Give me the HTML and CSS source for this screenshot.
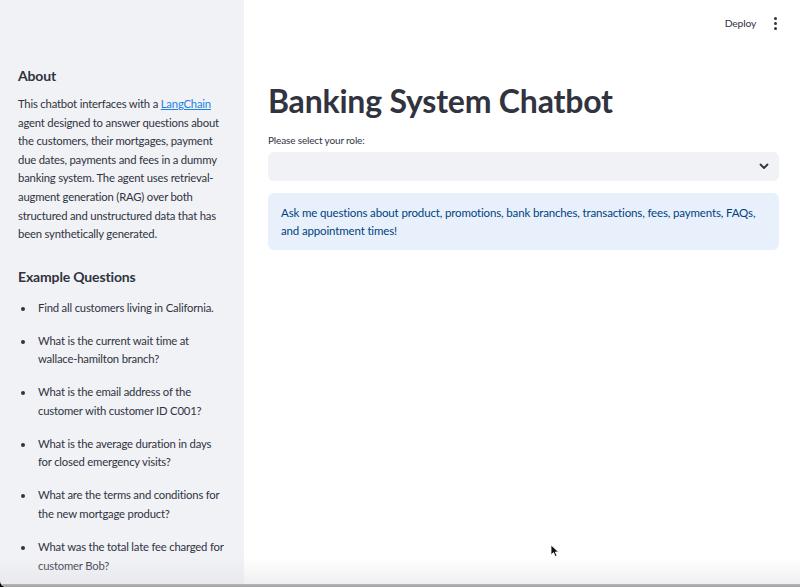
FILE: index.html
```html
<!DOCTYPE html>
<html>
<head>
<meta charset="utf-8">
<link rel="stylesheet" href="styles.css">
</head>
<body>
<div class="app">
  <aside class="sidebar">
    <h3 class="side-h">About</h3>
    <p class="side-p">This chatbot interfaces with a <a href="#">LangChain</a> agent designed to answer questions about the customers, their mortgages, payment due dates, payments and fees in a dummy banking system. The agent uses retrieval-augment generation (RAG) over both structured and unstructured data that has been synthetically generated.</p>
    <h3 class="side-h side-h2">Example Questions</h3>
    <ul class="side-list">
      <li><span>Find all customers living in California.</span></li>
      <li><span>What is the current wait time at wallace-hamilton branch?</span></li>
      <li><span>What is the email address of the customer with customer ID C001?</span></li>
      <li><span>What is the average duration in days for closed emergency visits?</span></li>
      <li><span>What are the terms and conditions for the new mortgage product?</span></li>
      <li><span>What was the total late fee charged for customer Bob?</span></li>
    </ul>
  </aside>
  <main class="main">
    <header class="topbar">
      <span class="deploy">Deploy</span>
      <span class="menu"><i></i><i></i><i></i></span>
    </header>
    <section class="content">
      <h1 class="title">Banking System Chatbot</h1>
      <label class="label">Please select your role:</label>
      <div class="select">
        <svg class="chev" width="10" height="7" viewBox="0 0 10 7"><path d="M1.5 1.5 L5 5 L8.5 1.5" fill="none" stroke="#31333f" stroke-width="1.8" stroke-linecap="round" stroke-linejoin="round"/></svg>
      </div>
      <div class="info">Ask me questions about product, promotions, bank branches, transactions, fees, payments, FAQs, and appointment times!</div>
    </section>
  </main>
</div>
<svg class="cursor" width="10" height="14" viewBox="0 0 10 14"><path d="M1 1 L1 11 L3.5 8.6 L5.3 12.6 L7 11.8 L5.3 8 L8.6 8 Z" fill="#111" stroke="#fff" stroke-width="0.8"/></svg>
<div class="bottom-fade"></div>
</body>
</html>
```

FILE: styles.css
```css
* { box-sizing: border-box; }
html, body { margin: 0; padding: 0; }
body {
  width: 800px;
  height: 587px;
  overflow: hidden;
  font-family: "Lato", "Noto Sans", sans-serif;
  color: #31333f;
  background: #fff;
  position: relative;
}
.app {
  display: flex;
  height: 587px;
}
.sidebar {
  width: 244px;
  flex: none;
  background: #f0f2f6;
  padding: 66px 18px 0 18px;
}
.side-h {
  margin: 0;
  font-size: 14px;
  font-weight: 700;
  line-height: 20px;
  color: #31333f;
  letter-spacing: -0.15px;
}
.side-p {
  margin: 9px 0 0 0;
  font-size: 11.3px;
  letter-spacing: -0.2px;
  line-height: 18.6px;
  color: #31333f;
}
.side-p a { color: #1c83e1; text-decoration: underline; }
.side-h2 { margin-top: 23px; }
.side-list {
  list-style: none;
  margin: 12px 0 0 0;
  padding: 0;
  font-size: 11.3px;
  letter-spacing: -0.2px;
  line-height: 18.6px;
}
.side-list li {
  display: flex;
  align-items: flex-start;
  margin-bottom: 14.4px;
}
.side-list li::before {
  content: "";
  flex: none;
  width: 4px;
  height: 4px;
  border-radius: 50%;
  background: #31333f;
  margin: 8px 13px 0 3px;
}
.main {
  flex: 1;
  display: flex;
  flex-direction: column;
}
.topbar {
  height: 46px;
  display: flex;
  align-items: center;
  justify-content: flex-end;
  padding-right: 23px;
  gap: 18px;
}
.deploy {
  font-size: 10.3px;
  letter-spacing: -0.2px;
  color: #31333f;
}
.menu {
  display: flex;
  flex-direction: column;
  gap: 2px;
  align-items: center;
}
.menu i {
  width: 3px;
  height: 3px;
  background: #31333f;
  border-radius: 50%;
  display: block;
}
.content {
  padding: 36px 21px 0 24px;
}
.title {
  margin: 0;
  font-size: 32px;
  font-weight: 700;
  line-height: 38px;
  color: #31333f;
  letter-spacing: -0.2px;
}
.label {
  display: block;
  margin-top: 13px;
  font-size: 10px;
  letter-spacing: -0.15px;
  line-height: 14px;
  color: #31333f;
}
.select {
  margin-top: 5px;
  height: 29px;
  background: #f0f2f6;
  border-radius: 6px;
  display: flex;
  align-items: center;
  justify-content: flex-end;
  padding-right: 10px;
}
.info {
  margin-top: 12px;
  background: #e8f1fb;
  border-radius: 6px;
  padding: 11px 16px 10px 13px;
  font-size: 11.5px;
  letter-spacing: -0.15px;
  line-height: 18px;
  color: #004280;
}
.cursor {
  position: absolute;
  left: 550px;
  top: 544px;
}
.bottom-fade {
  position: absolute;
  left: 0;
  right: 0;
  bottom: 0;
  height: 30px;
  background: linear-gradient(to bottom, rgba(230,230,232,0) 0%, rgba(225,225,228,0.5) 90%, #a9a9ab 92%, #a9a9ab 100%);
  border-bottom-left-radius: 6px;
  box-shadow: -4px 4px 0 0 #000;
}
```
